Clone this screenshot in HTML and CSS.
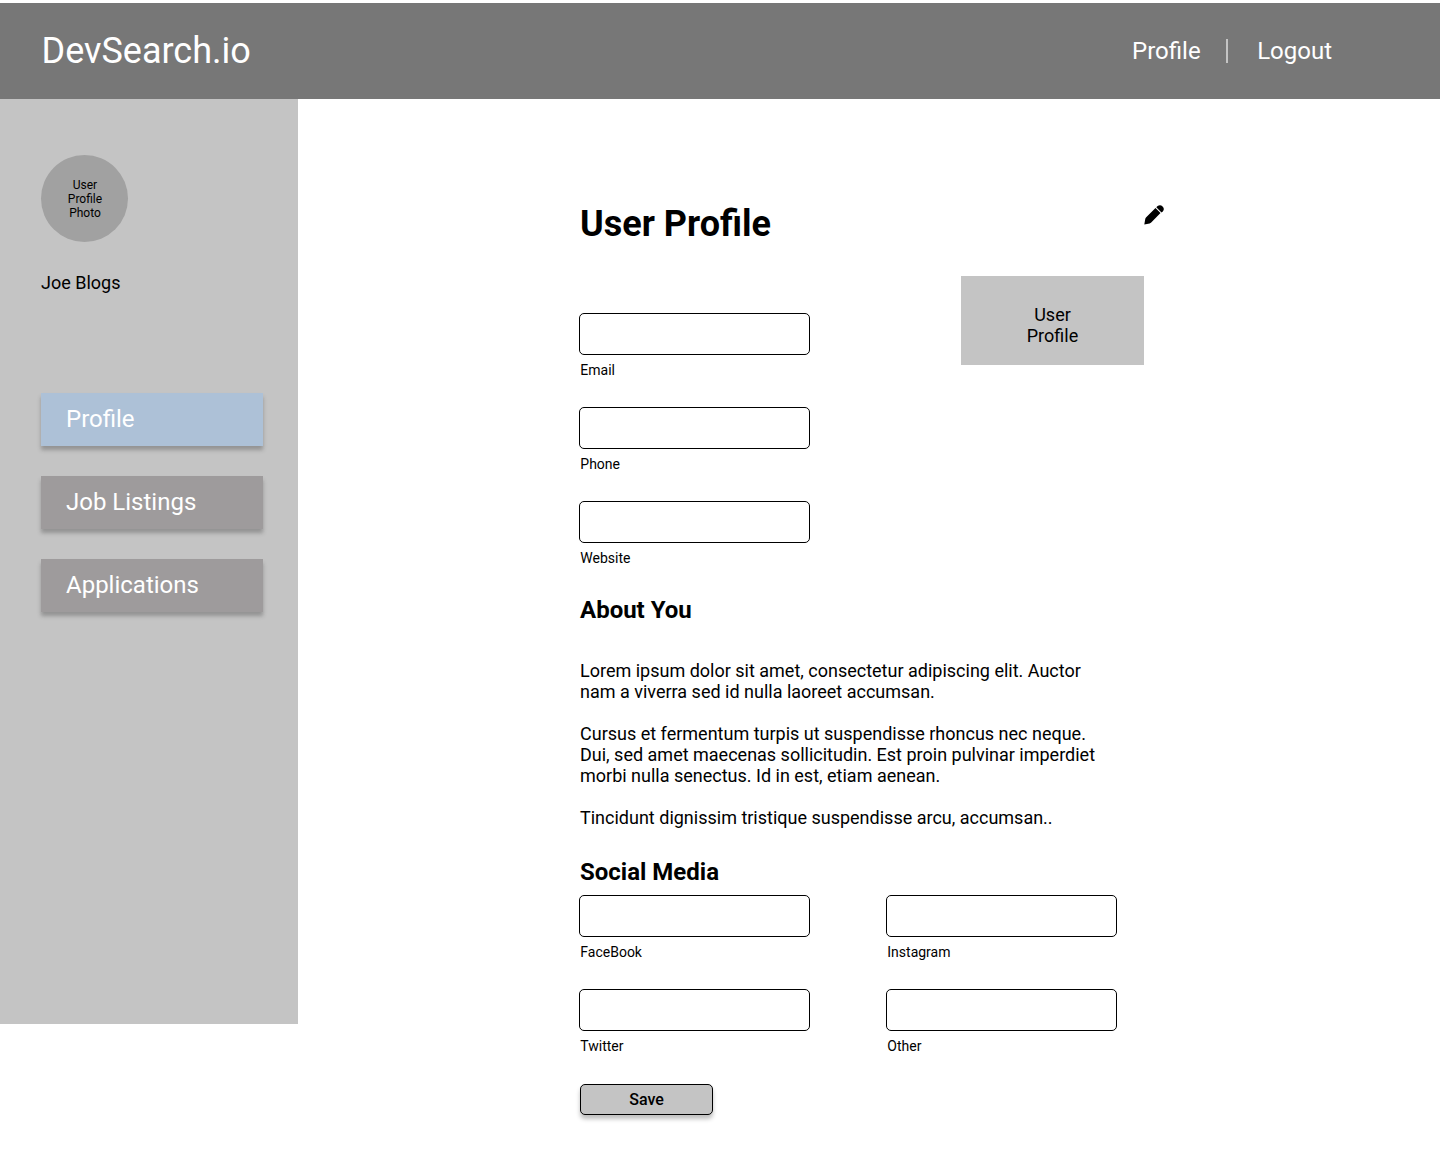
FILE: index.html
```html
<!DOCTYPE html>
<html lang="en">
<head>
<meta charset="utf-8">
<title>DevSearch.io - User Profile</title>
<link rel="stylesheet" href="styles.css">
</head>
<body>
<header class="topbar">
  <div class="logo">DevSearch.io</div>
  <nav class="topnav">
    <a>Profile</a>
    <span class="divider"></span>
    <a>Logout</a>
  </nav>
</header>
<div class="layout">
  <aside class="sidebar">
    <div class="avatar">User<br>Profile<br>Photo</div>
    <div class="username">Joe Blogs</div>
    <nav class="menu">
      <a class="menu-item active">Profile</a>
      <a class="menu-item">Job Listings</a>
      <a class="menu-item">Applications</a>
    </nav>
  </aside>
  <main class="content">
    <div class="heading">
      <h1>User Profile</h1>
      <svg class="edit" width="20" height="20" viewBox="0 0 20 20">
        <path d="M.3 19.600 1.300 13.800Q1.500 12.900 2.200 12.200L11.500 3.100 16.500 8.100 7.200 17.400Q6.500 18.100 5.600 18.400Z"/>
        <path d="M12.300 2.300 13.600 1.100C15.200-.2 17.100-.1 18.600 1.400 20.100 2.900 20.200 4.800 18.900 6.200L17.500 7.400Z"/>
      </svg>
    </div>
    <div class="contact">
      <div class="fields">
        <label class="field"><input type="text"><span>Email</span></label>
        <label class="field"><input type="text"><span>Phone</span></label>
        <label class="field"><input type="text"><span>Website</span></label>
      </div>
      <div class="preview">User<br>Profile</div>
    </div>
    <h2 class="about-title">About You</h2>
    <div class="about">
      <p>Lorem ipsum dolor sit amet, consectetur adipiscing elit. Auctor<br>nam a viverra sed id nulla laoreet accumsan.</p>
      <p>Cursus et fermentum turpis ut suspendisse rhoncus nec neque.<br>Dui, sed amet maecenas sollicitudin. Est proin pulvinar imperdiet<br>morbi nulla senectus. Id in est, etiam aenean.</p>
      <p>Tincidunt dignissim tristique suspendisse arcu, accumsan..</p>
    </div>
    <h2 class="social-title">Social Media</h2>
    <div class="social">
      <label class="field"><input type="text"><span>FaceBook</span></label>
      <label class="field"><input type="text"><span>Instagram</span></label>
      <label class="field"><input type="text"><span>Twitter</span></label>
      <label class="field"><input type="text"><span>Other</span></label>
    </div>
    <button class="save">Save</button>
  </main>
</div>
</body>
</html>
```
FILE: styles.css
```css
* { box-sizing: border-box; }
body {
  margin: 0;
  padding-top: 3px;
  background: #fff;
  color: #000;
  font: 18px/21px Roboto, sans-serif;
}
h1, h2, p { margin: 0; }
.topbar {
  display: flex;
  justify-content: space-between;
  align-items: center;
  height: 96px;
  padding: 0 108px 0 41.5px;
  background: #777;
  color: #fff;
}
.logo { font-size: 36px; line-height: 42px; }
.topnav { display: flex; align-items: center; font-size: 24px; line-height: 28px; }
.divider { width: 2px; height: 24px; margin: 0 29px 0 25.5px; background: #c4c4c4; }
.layout { display: flex; align-items: flex-start; }
.sidebar { width: 298px; height: 925px; padding: 56px 35px 0 41px; background: #c4c4c4; }
.avatar {
  display: flex;
  align-items: center;
  justify-content: center;
  width: 87px;
  height: 87px;
  padding-left: 1px;
  border-radius: 50%;
  background: #a1a1a1;
  font-size: 12px;
  line-height: 14px;
  text-align: center;
}
.username { margin-top: 30px; }
.menu { display: flex; flex-direction: column; gap: 30px; margin-top: 100px; }
.menu-item {
  height: 53px;
  padding: 12px 25px;
  background: #9e9b9c;
  box-shadow: 0 4px 4px rgba(0, 0, 0, .25);
  color: #fff;
  font-size: 24px;
  line-height: 28px;
}
.menu-item.active { background: #adc1d7; }
.content { width: 866px; padding: 104px 0 37px 281px; }
.heading { display: flex; justify-content: space-between; height: 42px; padding-left: 1px; }
h1 { font-size: 36px; line-height: 42px; }
.edit { margin-top: 2px; }
h2 { padding-left: 1px; font-size: 24px; line-height: 28px; }
.contact { display: flex; justify-content: space-between; align-items: flex-start; margin-top: 31px; padding-right: 20px; }
.fields { display: flex; flex-direction: column; gap: 29px; padding-top: 37px; }
.field { display: block; width: 231px; font-size: 14px; line-height: 16px; }
.field input {
  display: block;
  width: 231px;
  height: 42px;
  margin-bottom: 7px;
  border: 1px solid #000;
  border-radius: 5px;
  background: #fff;
}
.field span { display: block; padding-left: 1.3px; }
.preview { width: 183px; height: 89px; padding-top: 28px; background: #c4c4c4; text-align: center; }
.about-title { margin-top: 30px; }
.about { display: flex; flex-direction: column; gap: 21px; margin-top: 36px; padding-left: 1px; }
.social-title { margin-top: 30px; }
.social { display: grid; grid-template-columns: 231px 231px; gap: 29px 76px; margin-top: 9px; }
.save {
  display: block;
  width: 133px;
  height: 31px;
  margin: 30px 0 0 1px;
  padding: 0;
  border: 1px solid #000;
  border-radius: 5px;
  background: #c4c4c4;
  box-shadow: 0 4px 4px rgba(0, 0, 0, .25);
  color: #000;
  font: 500 16px/19px Roboto, sans-serif;
}
```
